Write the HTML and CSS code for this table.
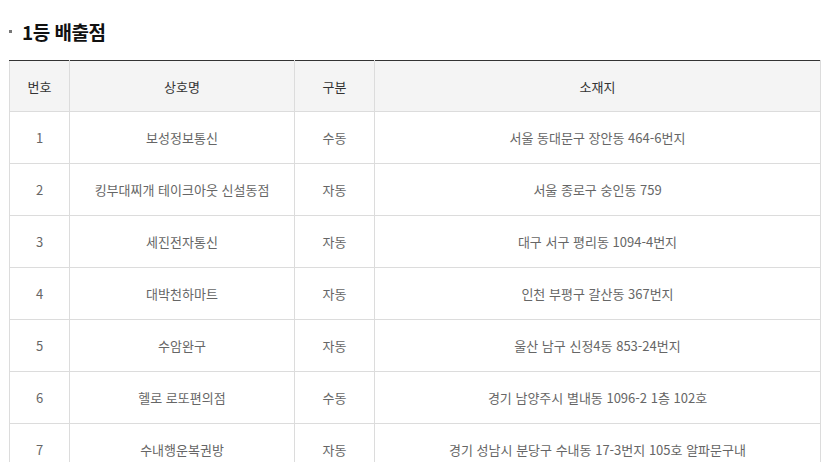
FILE: index.html
```html
<!DOCTYPE html>
<html lang="ko">
<head>
<meta charset="utf-8">
<link rel="stylesheet" href="styles.css">
</head>
<body>
<div class="page">
  <h3 class="title"><span class="bullet"></span>1등 배출점</h3>
  <table class="tbl">
    <colgroup>
      <col class="c1"><col class="c2"><col class="c3"><col class="c4">
    </colgroup>
    <thead>
      <tr><th>번호</th><th>상호명</th><th>구분</th><th>소재지</th></tr>
    </thead>
    <tbody>
      <tr><td>1</td><td>보성정보통신</td><td>수동</td><td>서울 동대문구 장안동 464-6번지</td></tr>
      <tr><td>2</td><td>킹부대찌개 테이크아웃 신설동점</td><td>자동</td><td>서울 종로구 숭인동 759</td></tr>
      <tr><td>3</td><td>세진전자통신</td><td>자동</td><td>대구 서구 평리동 1094-4번지</td></tr>
      <tr><td>4</td><td>대박천하마트</td><td>자동</td><td>인천 부평구 갈산동 367번지</td></tr>
      <tr><td>5</td><td>수암완구</td><td>자동</td><td>울산 남구 신정4동 853-24번지</td></tr>
      <tr><td>6</td><td>헬로 로또편의점</td><td>수동</td><td>경기 남양주시 별내동 1096-2 1층 102호</td></tr>
      <tr><td>7</td><td>수내행운복권방</td><td>자동</td><td>경기 성남시 분당구 수내동 17-3번지 105호 알파문구내</td></tr>
    </tbody>
  </table>
</div>
</body>
</html>
```
FILE: styles.css
```css
html, body {
  margin: 0;
  padding: 0;
  background: #fff;
}
body {
  font-family: "Noto Sans CJK KR", "Noto Sans", sans-serif;
  color: #666;
}
.page {
  padding: 0 2px 0 9px;
}
.title {
  margin: 0;
  height: 60px;
  display: flex;
  align-items: center;
  font-size: 19px;
  font-weight: bold;
  color: #111;
  letter-spacing: -0.5px;
  padding-top: 2px;
  box-sizing: border-box;
}
.bullet {
  display: inline-block;
  width: 3px;
  height: 3px;
  background: #777;
  margin: 0 10px 0 0;
}
.tbl {
  width: 811px;
  border-collapse: collapse;
  table-layout: fixed;
  border-top: 1px solid #333;
  font-size: 13px;
}
.c1 { width: 60px; }
.c2 { width: 225px; }
.c3 { width: 80px; }
.c4 { width: 446px; }
.tbl th, .tbl td {
  border: 1px solid #dcdcdc;
  text-align: center;
  padding: 0;
  white-space: nowrap;
}
.tbl thead tr:first-child th {
  border-top: 1px solid #333;
}
.tbl th {
  height: 50px;
  background: #f4f4f4;
  color: #333;
  font-weight: normal;
}
.tbl td {
  height: 51px;
  color: #666;
}
```
